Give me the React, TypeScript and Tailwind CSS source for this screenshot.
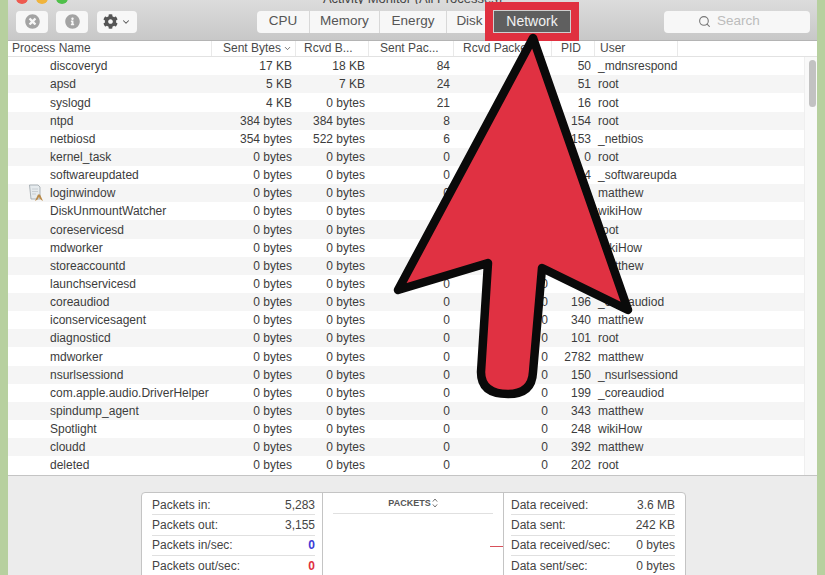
import React from 'react';
import { Search, ChevronDown } from 'lucide-react';
import { FaTimesCircle, FaInfoCircle, FaCog } from 'react-icons/fa';

const processes = [
  ['discoveryd', '17 KB', '18 KB', '84', '', '50', '_mdnsrespond'],
  ['apsd', '5 KB', '7 KB', '24', '', '51', 'root'],
  ['syslogd', '4 KB', '0 bytes', '21', '', '16', 'root'],
  ['ntpd', '384 bytes', '384 bytes', '8', '', '154', 'root'],
  ['netbiosd', '354 bytes', '522 bytes', '6', '', '153', '_netbios'],
  ['kernel_task', '0 bytes', '0 bytes', '0', '', '0', 'root'],
  ['softwareupdated', '0 bytes', '0 bytes', '0', '', '244', '_softwareupda'],
  ['loginwindow', '0 bytes', '0 bytes', '0', '0', '91', 'matthew'],
  ['DiskUnmountWatcher', '0 bytes', '0 bytes', '0', '0', '312', 'wikiHow'],
  ['coreservicesd', '0 bytes', '0 bytes', '0', '0', '78', 'root'],
  ['mdworker', '0 bytes', '0 bytes', '0', '0', '305', 'wikiHow'],
  ['storeaccountd', '0 bytes', '0 bytes', '0', '0', '287', 'matthew'],
  ['launchservicesd', '0 bytes', '0 bytes', '0', '0', '', ''],
  ['coreaudiod', '0 bytes', '0 bytes', '0', '0', '196', '_coreaudiod'],
  ['iconservicesagent', '0 bytes', '0 bytes', '0', '0', '340', 'matthew'],
  ['diagnosticd', '0 bytes', '0 bytes', '0', '0', '101', 'root'],
  ['mdworker', '0 bytes', '0 bytes', '0', '0', '2782', 'matthew'],
  ['nsurlsessiond', '0 bytes', '0 bytes', '0', '0', '150', '_nsurlsessiond'],
  ['com.apple.audio.DriverHelper', '0 bytes', '0 bytes', '0', '0', '199', '_coreaudiod'],
  ['spindump_agent', '0 bytes', '0 bytes', '0', '0', '343', 'matthew'],
  ['Spotlight', '0 bytes', '0 bytes', '0', '0', '248', 'wikiHow'],
  ['cloudd', '0 bytes', '0 bytes', '0', '0', '392', 'matthew'],
  ['deleted', '0 bytes', '0 bytes', '0', '0', '202', 'root'],
];

const tabs = [
  { label: 'CPU', w: 'w-[53px]' },
  { label: 'Memory', w: 'w-[70px]' },
  { label: 'Energy', w: 'w-[67px]' },
  { label: 'Disk', w: 'w-[46px]' },
];

const packetStats = [
  { label: 'Packets in:', value: '5,283', color: 'text-[#444]' },
  { label: 'Packets out:', value: '3,155', color: 'text-[#444]' },
  { label: 'Packets in/sec:', value: '0', color: 'text-[#3b3bd6] font-bold' },
  { label: 'Packets out/sec:', value: '0', color: 'text-[#e0303f] font-bold' },
];

const dataStats = [
  { label: 'Data received:', value: '3.6 MB' },
  { label: 'Data sent:', value: '242 KB' },
  { label: 'Data received/sec:', value: '0 bytes' },
  { label: 'Data sent/sec:', value: '0 bytes' },
];

const LogIcon = () => (
  <svg width="18" height="18" viewBox="0 0 18 18" className="absolute left-[19px] top-0">
    <path d="M2.5 1 H11 L13 3 V15 H4 Z" fill="#e6ebee" stroke="#9aa3aa" strokeWidth="0.8" />
    <path d="M5 5 H11 M5 7.5 H11 M5 10 H9" stroke="#c0c6cb" strokeWidth="0.8" />
    <path d="M8 17 L11 10.5 L13 10.5 L16 17 L13.5 15.5 L12 13 L10.5 15.5 Z" fill="#b98a4a" />
  </svg>
);

const App = () => {
  return (
    <div className="w-[825px] h-[575px] overflow-hidden relative bg-[#b7d09f] pl-2 pr-[8px] font-['Liberation_Sans',sans-serif]">
      <div className="w-[809px] h-[575px] flex flex-col bg-white">
        {/* title bar */}
        <div className="h-[41px] shrink-0 bg-gradient-to-b from-[#dcdcdc] to-[#c8c8c8] border-b border-[#b4b4b4]">
          <div className="h-[4px] overflow-hidden relative flex items-end justify-center">
            <span className="text-[13px] leading-none text-[#444] mb-[-1px]">Activity Monitor (All Processes)</span>
            <div className="absolute left-[8px] bottom-0 flex gap-2">
              <span className="w-3 h-3 rounded-full bg-[#ee5a50]" />
              <span className="w-3 h-3 rounded-full bg-[#f0b43c]" />
              <span className="w-3 h-3 rounded-full bg-[#4fc04a]" />
            </div>
          </div>
          <div className="flex items-center h-[23px] mt-[6px] pl-2 pr-[7px]">
            <div className="w-[32px] h-[22px] rounded bg-[#f7f7f7] flex items-center justify-center text-[#a3a3a3]">
              <FaTimesCircle size={15} />
            </div>
            <div className="w-[32px] h-[22px] ml-2 rounded bg-[#f7f7f7] flex items-center justify-center text-[#a3a3a3]">
              <FaInfoCircle size={15} />
            </div>
            <div className="w-[40px] h-[22px] ml-[9px] rounded bg-[#f7f7f7] flex items-center justify-center gap-[3px] text-[#555]">
              <FaCog size={15} />
              <ChevronDown size={10} strokeWidth={2.5} />
            </div>
            <div className="flex ml-[120px] h-[22px] rounded-l bg-[#f7f7f7] text-[13.5px] text-[#555]">
              {tabs.map(tab => (
                <div key={tab.label} className={`${tab.w} flex items-center justify-center border-r border-[#d8d8d8]`}>
                  {tab.label}
                </div>
              ))}
            </div>
            <div className="w-[78px] h-[23px] border border-[#cfcfcf] bg-[#5f5f5f] text-[14px] text-[#f2f2f2] flex items-center justify-center">
              Network
            </div>
            <div className="w-[146px] h-[22px] ml-auto pl-[34px] rounded bg-[#f7f7f7] flex items-center gap-[6px] text-[13.5px] text-[#bcbcbc]">
              <Search size={13} className="text-[#777]" />
              <span>Search</span>
            </div>
          </div>
        </div>

        {/* column headers */}
        <div className="h-[16.2px] shrink-0 flex text-[12px] leading-[15px] text-[#4a4a4a] border-b border-[#e2e2e2] bg-white">
          <div className="w-[204px] pl-1 border-r border-[#e9e9e9]">Process Name</div>
          <div className="w-[84px] pl-[11px] border-r border-[#e9e9e9] flex items-center">
            <span>Sent Bytes</span>
            <ChevronDown size={9} className="ml-[2px]" />
          </div>
          <div className="w-[73px] pl-2 border-r border-[#e9e9e9]">Rcvd B...</div>
          <div className="w-[85px] pl-[11px] border-r border-[#e9e9e9]">Sent Pac...</div>
          <div className="w-[98px] pl-[9px] border-r border-[#e9e9e9]">Rcvd Packets</div>
          <div className="w-[43px] pl-[9px] border-r border-[#e9e9e9]">PID</div>
          <div className="w-[83px] pl-[5px] border-r border-[#e9e9e9]">User</div>
        </div>

        {/* process table */}
        <div className="h-[417.8px] shrink-0 flex overflow-hidden">
          <div className="w-[796px] shrink-0">
            {processes.map((p, i) => (
              <div
                key={i}
                className={`relative h-[18.15px] flex items-center text-[12px] text-[#3c3c3c] ${i % 2 === 1 ? 'bg-[#f5f5f5]' : 'bg-white'}`}
              >
                {p[0] === 'loginwindow' && <LogIcon />}
                <div className="w-[204px] pl-[42px] whitespace-nowrap">{p[0]}</div>
                <div className="w-[84px] pr-1 text-right">{p[1]}</div>
                <div className="w-[73px] pr-1 text-right">{p[2]}</div>
                <div className="w-[85px] pr-1 text-right">{p[3]}</div>
                <div className="w-[98px] pr-1 text-right">{p[4]}</div>
                <div className="w-[39px] text-right">{p[5]}</div>
                <div className="pl-[7px] whitespace-nowrap">{p[6]}</div>
              </div>
            ))}
          </div>
          <div className="flex-1 bg-[#f9f9f9] border-l border-[#efefef] pl-[4px] pt-[3px]">
            <div className="w-[7px] h-[47px] rounded-full bg-[#c2c2c2]" />
          </div>
        </div>

        {/* bottom panel */}
        <div className="flex-1 bg-[#ececec] border-t border-[#c4c4c4] pt-[16px] pl-[133px]">
          <div className="w-[545px] h-[90px] flex bg-white border border-[#c4c4c4] rounded-t-[4px] text-[12px] text-[#444]">
            <div className="w-[181px] pt-[2px] pl-[10px] pr-[7px] border-r border-[#c4c4c4]">
              {packetStats.map((s, i) => (
                <div key={s.label} className={`h-[20.3px] flex items-center justify-between ${i < 3 ? 'border-b border-[#e0e0e0]' : ''}`}>
                  <span>{s.label}</span>
                  <span className={s.color}>{s.value}</span>
                </div>
              ))}
            </div>
            <div className="w-[181px] pt-[3px] px-[10px] border-r border-[#c4c4c4] relative">
              <div className="h-[18px] flex items-start justify-center border-b border-[#e0e0e0] text-[9px] leading-[14px] font-bold text-[#555]">
                PACKETS
                <svg width="6" height="10" viewBox="0 0 6 10" className="ml-[1px] mt-[2px]" fill="none" stroke="#666" strokeWidth="0.9">
                  <path d="M0.8 3.6 L3 1 L5.2 3.6 M0.8 6.4 L3 9 L5.2 6.4" />
                </svg>
              </div>
              <div className="absolute right-0 top-[53px] w-[13px] h-px bg-[#d8505a]" />
            </div>
            <div className="flex-1 pt-[2px] pl-[7px] pr-[10px]">
              {dataStats.map((s, i) => (
                <div key={s.label} className={`h-[20.3px] flex items-center justify-between ${i < 3 ? 'border-b border-[#e0e0e0]' : ''}`}>
                  <span>{s.label}</span>
                  <span>{s.value}</span>
                </div>
              ))}
            </div>
          </div>
        </div>
      </div>

      {/* red highlight box around the Network tab */}
      <div className="absolute left-[485px] top-[2px] w-[94px] h-[39px] border-[8px] border-[#e0303f]" />

      {/* big arrow */}
      <svg width="825" height="575" viewBox="0 0 825 575" className="absolute inset-0 pointer-events-none">
        <path
          d="M533 38 L628 310 L542 268 L533 372 Q532 394 508 394 Q481 394 481 372 L488 263 L398 290 Z"
          fill="#e03142"
          stroke="#0a0a0a"
          strokeWidth="8.5"
          strokeLinejoin="round"
        />
      </svg>
    </div>
  );
};

export default App;
